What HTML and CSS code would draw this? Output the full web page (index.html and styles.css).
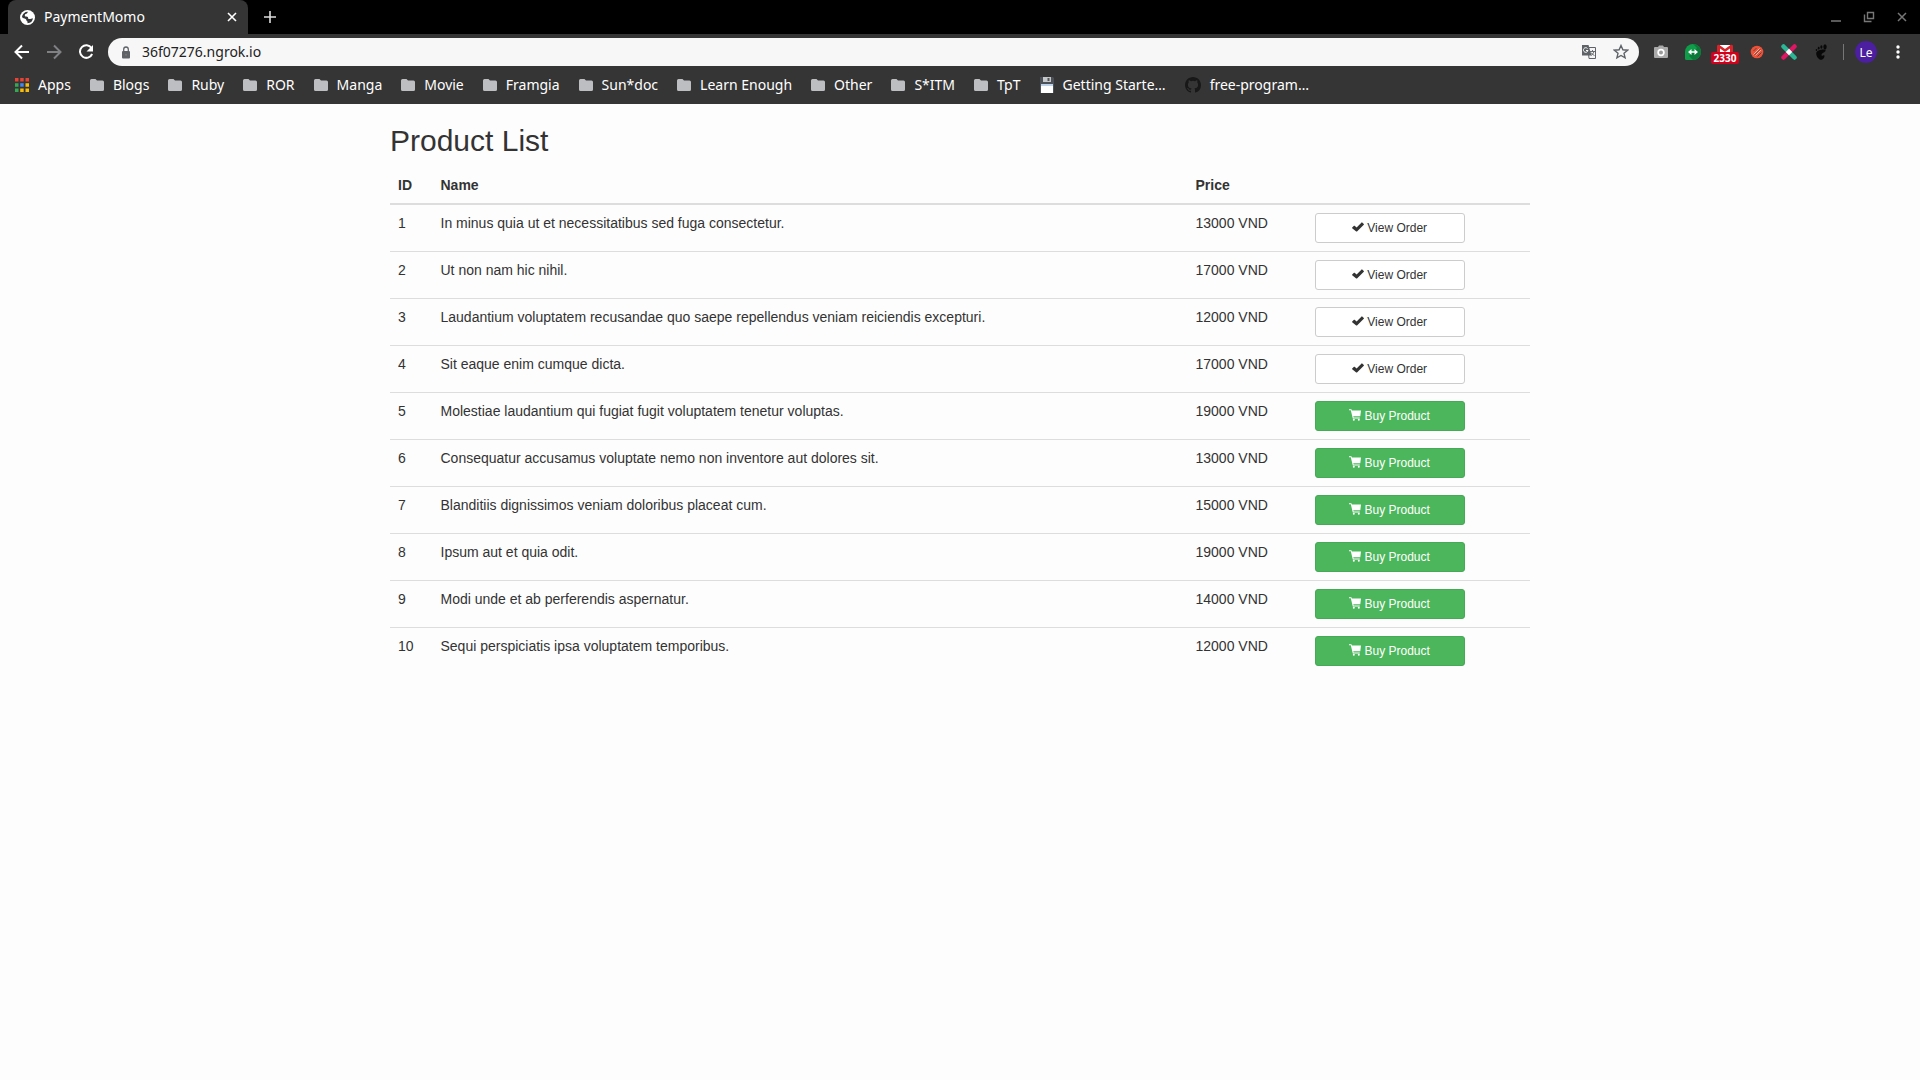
FILE: index.html
```html
<!DOCTYPE html>
<html lang="en">
<head>
	<meta charset="utf-8">
	<title>PaymentMomo</title>
	<link rel="stylesheet" href="styles.css">
</head>
<body>

	<!-- shapes used more than once -->
	<svg class="sprite" aria-hidden="true">
		<symbol id="folder" viewBox="0 0 14 12">
			<path d="M1.500 0h4l1.500 1.500h5.500A1.500 1.500 0 0 1 14 3v7.500a1.500 1.500 0 0 1-1.500 1.500h-11A1.500 1.500 0 0 1 0 10.500v-9A1.500 1.500 0 0 1 1.500 0z" fill="#bdbec1"/>
		</symbol>
		<symbol id="ok" viewBox="0 0 12 12">
			<path d="M.2 6.600 2 4.800q.3-.3.600 0l2 1.800L9.600 1.500q.3-.3.600 0l1.600 1.600q.3.300 0 .6L5 10.400q-.4.300-.8 0L.2 7.200q-.3-.3 0-.6z" fill="#333"/>
		</symbol>
		<symbol id="cart" viewBox="0 0 12 12">
			<path d="M0 .3h2.400l.5 1.200H12L11.300 7.300H4.300l.3 1.200h6.200v1H3.800L1.800 1.300H0z" fill="#fff"/>
			<circle cx="4.800" cy="10.800" r="1" fill="#fff"/>
			<circle cx="9.800" cy="10.800" r="1" fill="#fff"/>
		</symbol>
	</svg>

	<header class="browser">
		<div class="tabs">
			<div class="tab">
				<svg width="15" height="15" viewBox="0 0 16 16"><circle cx="8" cy="8" r="8" fill="#fff"/><path d="M8.500 2c-1 1-.5 1.500-1.800 2C5.300 4.500 5 5 5.200 6.300c.2 1 2.800.2 3.300 1.300.4 1-.2 1.600 1 1.900 1.500.3 2.700-.6 4.300-.8A6 6 0 0 1 8 14v-1.700c-1.500-.3-1-2-2-2.600C4.500 9 3 8.500 2.100 7.500A6 6 0 0 1 8.500 2z" fill="#35363a"/></svg>
				<span class="tab-title">PaymentMomo</span>
				<button class="icon-btn" aria-label="Close tab"><svg width="10" height="10" viewBox="0 0 10 10"><path d="M1 1l8 8M9 1l-8 8" stroke="#fff" stroke-width="1.600"/></svg></button>
			</div>
			<button class="icon-btn new-tab" aria-label="New tab"><svg width="12" height="12" viewBox="0 0 12 12"><path d="M6 0v12M0 6h12" stroke="#ddd" stroke-width="1.600"/></svg></button>
			<div class="window-buttons">
				<button class="icon-btn" aria-label="Minimize"><svg width="12" height="12" viewBox="0 0 12 12"><path d="M1 10h10" stroke="#777" stroke-width="1.500"/></svg></button>
				<button class="icon-btn" aria-label="Restore"><svg width="12" height="12" viewBox="0 0 12 12"><path d="M4.500 1.500h6v6h-6zM1.500 3.500v7h7" fill="none" stroke="#777" stroke-width="1.400"/></svg></button>
				<button class="icon-btn" aria-label="Close"><svg width="12" height="12" viewBox="0 0 12 12"><path d="M2 2l8 8M10 2l-8 8" stroke="#777" stroke-width="1.500"/></svg></button>
			</div>
		</div>

		<div class="toolbar">
			<div class="nav">
				<button class="icon-btn" aria-label="Back"><svg width="16" height="16" viewBox="0 0 16 16"><path d="M15 8H2M8 1.500 1.500 8 8 14.500" fill="none" stroke="#fff" stroke-width="2"/></svg></button>
				<button class="icon-btn" aria-label="Forward"><svg width="16" height="16" viewBox="0 0 16 16"><path d="M1 8h13M8 1.500 14.500 8 8 14.500" fill="none" stroke="#808184" stroke-width="2"/></svg></button>
				<button class="icon-btn" aria-label="Reload"><svg width="16" height="16" viewBox="0 0 16 16"><path d="M13.500 4A6.300 6.300 0 1 0 14.100 10" fill="none" stroke="#fff" stroke-width="2"/><path d="M15 1v6.500H8.500z" fill="#fff"/></svg></button>
			</div>

			<div class="address">
				<svg width="10" height="13" viewBox="0 0 10 13"><rect x="1" y="5" width="8" height="7.500" rx="1" fill="#5f6368"/><path d="M2.700 5.500V3.300a2.300 2.300 0 0 1 4.600 0v2.200" fill="none" stroke="#5f6368" stroke-width="1.300"/><circle cx="5" cy="8.700" r="1" fill="#777"/></svg>
				<input class="url" type="text" aria-label="Address" value="36f07276.ngrok.io">
				<div class="address-actions">
					<button class="icon-btn" aria-label="Translate"><svg width="16" height="16" viewBox="0 0 16 16"><path d="M7 3.500h7.500v11H8z" fill="#f5f5f5" stroke="#5f6368"/><path d="M1 1h6.500l3 10.500H1z" fill="#5f6368"/><path d="M6.500 4.500A2.300 2.300 0 1 0 7 6.500H5" fill="none" stroke="#fff"/><path d="M9 7.500h5M11.500 6v1.500M13 7.500q-.5 2.500-3 4M10 8.500q1 2 3.500 3" fill="none" stroke="#5f6368" stroke-width=".9"/></svg></button>
					<button class="icon-btn" aria-label="Bookmark this page"><svg width="16" height="16" viewBox="0 0 16 16"><path d="M8 1.500l1.900 4.300 4.700.4-3.600 3.100 1.100 4.600L8 11.500l-4.100 2.400L5 9.300 1.400 6.200l4.700-.4z" fill="none" stroke="#5f6368" stroke-width="1.400"/></svg></button>
				</div>
			</div>

			<div class="extensions">
				<button class="icon-btn" aria-label="Screenshot"><svg width="16" height="16" viewBox="0 0 16 16"><path d="M2 3h3l1-1.500h4L11 3h3q1 0 1 1v9q0 1-1 1H2q-1 0-1-1V4q0-1 1-1z" fill="#aaa"/><circle cx="8" cy="8.500" r="3.700" fill="#fff"/><circle cx="8" cy="8.500" r="2" fill="#999"/></svg></button>
				<button class="icon-btn" aria-label="Hangouts"><svg width="16" height="16" viewBox="0 0 16 16"><path d="M8 0a8 8 0 0 1 0 16H1.500Q0 16 0 14.500V8a8 8 0 0 1 8-8z" fill="#0f9d4a"/><path d="M8 0a8 8 0 0 1 0 16l-4-4 8-8z" fill="#0b7a38"/><path d="M4 8h8" stroke="#fff" stroke-width="1.500"/><path d="M6.500 5v6L3 8zM9.500 5v6L13 8z" fill="#fff"/></svg></button>
				<button class="icon-btn mail" aria-label="Mail"><svg width="16" height="16" viewBox="0 0 16 16"><rect y="1" width="16" height="12" rx="1" fill="#d8232a"/><path d="M3 1h10v12H3z" fill="#fff"/><path d="M1 1.500l7 5 7-5" fill="none" stroke="#d8232a" stroke-width="2.500"/></svg><span class="badge">2330</span></button>
				<button class="icon-btn" aria-label="Blocker"><svg width="16" height="16" viewBox="0 0 16 16"><circle cx="8" cy="8" r="6.300" fill="#ef5138"/><path d="M4.500 7l3-3M8.500 12.500l4-4" stroke="#444" stroke-width=".9"/><path d="M4.500 10.500l6-6M6.500 11.500l5.500-5.500" stroke="#f7b2a2" stroke-width="1"/><path d="M5.500 11l6-6" stroke="#444" stroke-width=".7"/></svg></button>
				<button class="icon-btn" aria-label="Pen tool"><svg width="16" height="16" viewBox="0 0 16 16"><g fill="none" stroke-width="4.500" stroke-linecap="round"><path d="M2.500 13.500l11-11" stroke="#e01563"/><path d="M2.500 2.500l11 11" stroke="#2bb795"/></g><path d="M8 4.800 11.200 8 8 11.200 4.800 8z" fill="#fff"/></svg></button>
				<button class="icon-btn" aria-label="Gnome"><svg width="16" height="16" viewBox="0 0 16 16"><path d="M12.500 5.500C9 5 3 6 3.200 9.500c.1 3 2.400 6.300 5 6.300 2 0 3.400-2.500 3.300-4-.3-1.300-1.500 0-2.500 0-1-.3-.5-2 .5-2.600 1.500-.8 3.500-1.500 3-3.700z" fill="#080808"/><ellipse cx="12" cy="2.800" rx="1.700" ry="2.600" fill="#080808"/><ellipse cx="8.400" cy="3" rx="1.100" ry="1.700" fill="#080808"/><ellipse cx="5.700" cy="4.200" rx=".9" ry="1.400" fill="#080808"/><ellipse cx="3.500" cy="6" rx=".8" ry="1.100" fill="#080808"/></svg></button>
			</div>
			<span class="divider"></span>
			<button class="avatar">Le</button>
			<button class="icon-btn" aria-label="Menu"><svg width="16" height="16" viewBox="0 0 16 16" fill="#fff"><circle cx="8" cy="3" r="1.700"/><circle cx="8" cy="8" r="1.700"/><circle cx="8" cy="13" r="1.700"/></svg></button>
		</div>

		<nav class="bookmarks">
			<a href="#"><svg width="14" height="14" viewBox="0 0 14 14"><path d="M0 0h3.500v3.500H0zM5.200 0h3.500v3.500H5.200zM10.500 0H14v3.500h-3.500z" fill="#ea4335"/><path d="M0 5.200h3.500v3.500H0zM0 10.500h3.500V14H0z" fill="#34a853"/><path d="M5.200 5.200h3.500v3.500H5.200z" fill="#4285f4"/><path d="M10.500 5.200H14v3.500h-3.500zM5.200 10.500h3.500V14H5.200zM10.500 10.500H14V14h-3.500z" fill="#fbbc05"/></svg>Apps</a>
			<a href="#"><svg width="14" height="12"><use href="#folder"/></svg>Blogs</a>
			<a href="#"><svg width="14" height="12"><use href="#folder"/></svg>Ruby</a>
			<a href="#"><svg width="14" height="12"><use href="#folder"/></svg>ROR</a>
			<a href="#"><svg width="14" height="12"><use href="#folder"/></svg>Manga</a>
			<a href="#"><svg width="14" height="12"><use href="#folder"/></svg>Movie</a>
			<a href="#"><svg width="14" height="12"><use href="#folder"/></svg>Framgia</a>
			<a href="#"><svg width="14" height="12"><use href="#folder"/></svg>Sun*doc</a>
			<a href="#"><svg width="14" height="12"><use href="#folder"/></svg>Learn Enough</a>
			<a href="#"><svg width="14" height="12"><use href="#folder"/></svg>Other</a>
			<a href="#"><svg width="14" height="12"><use href="#folder"/></svg>S*ITM</a>
			<a href="#"><svg width="14" height="12"><use href="#folder"/></svg>TpT</a>
			<a href="#"><svg width="14" height="16" viewBox="0 0 14 16"><path d="M0 0h13l1 1v15H0z" fill="#4b5157"/><path d="M3 0h8v5H3z" fill="#c5c8ca"/><path d="M7.500 1h2v3h-2z" fill="#555"/><path d="M1 7h12v9H1z" fill="#fff"/><path d="M1 7h12v2H1z" fill="#bcd0ea"/></svg>Getting Starte…</a>
			<a href="#"><svg width="16" height="16" viewBox="0 0 16 16"><path d="M8 0C3.580 0 0 3.580 0 8c0 3.540 2.290 6.530 5.470 7.590.4.070.55-.17.55-.38 0-.19-.01-.82-.01-1.490-2.010.37-2.530-.49-2.690-.94-.09-.23-.48-.94-.82-1.130-.28-.15-.68-.52-.01-.53.63-.01 1.080.58 1.230.82.72 1.210 1.870.87 2.330.66.07-.52.28-.87.51-1.070-1.780-.2-3.640-.89-3.640-3.950 0-.87.31-1.590.82-2.150-.08-.2-.36-1.020.08-2.120 0 0 .67-.21 2.200.82a7.600 7.600 0 0 1 4 0c1.530-1.040 2.200-.82 2.200-.82.44 1.100.16 1.920.08 2.120.51.56.82 1.270.82 2.150 0 3.070-1.870 3.750-3.650 3.950.29.25.54.73.54 1.480 0 1.070-.01 1.930-.01 2.200 0 .21.150.46.55.38A8 8 0 0 0 16 8c0-4.420-3.580-8-8-8z" fill="#181818"/></svg>free-program…</a>
		</nav>
	</header>

	<main class="container">
		<h2>Product List</h2>
		<table class="table">
			<thead>
				<tr><th>ID</th><th>Name</th><th>Price</th><th></th></tr>
			</thead>
			<tbody>
				<tr>
					<td>1</td>
					<td>In minus quia ut et necessitatibus sed fuga consectetur.</td>
					<td>13000 VND</td>
					<td><button class="btn btn-default"><svg width="12" height="12"><use href="#ok"/></svg> View Order</button></td>
				</tr>
				<tr>
					<td>2</td>
					<td>Ut non nam hic nihil.</td>
					<td>17000 VND</td>
					<td><button class="btn btn-default"><svg width="12" height="12"><use href="#ok"/></svg> View Order</button></td>
				</tr>
				<tr>
					<td>3</td>
					<td>Laudantium voluptatem recusandae quo saepe repellendus veniam reiciendis excepturi.</td>
					<td>12000 VND</td>
					<td><button class="btn btn-default"><svg width="12" height="12"><use href="#ok"/></svg> View Order</button></td>
				</tr>
				<tr>
					<td>4</td>
					<td>Sit eaque enim cumque dicta.</td>
					<td>17000 VND</td>
					<td><button class="btn btn-default"><svg width="12" height="12"><use href="#ok"/></svg> View Order</button></td>
				</tr>
				<tr>
					<td>5</td>
					<td>Molestiae laudantium qui fugiat fugit voluptatem tenetur voluptas.</td>
					<td>19000 VND</td>
					<td><button class="btn btn-success"><svg width="12" height="12"><use href="#cart"/></svg> Buy Product</button></td>
				</tr>
				<tr>
					<td>6</td>
					<td>Consequatur accusamus voluptate nemo non inventore aut dolores sit.</td>
					<td>13000 VND</td>
					<td><button class="btn btn-success"><svg width="12" height="12"><use href="#cart"/></svg> Buy Product</button></td>
				</tr>
				<tr>
					<td>7</td>
					<td>Blanditiis dignissimos veniam doloribus placeat cum.</td>
					<td>15000 VND</td>
					<td><button class="btn btn-success"><svg width="12" height="12"><use href="#cart"/></svg> Buy Product</button></td>
				</tr>
				<tr>
					<td>8</td>
					<td>Ipsum aut et quia odit.</td>
					<td>19000 VND</td>
					<td><button class="btn btn-success"><svg width="12" height="12"><use href="#cart"/></svg> Buy Product</button></td>
				</tr>
				<tr>
					<td>9</td>
					<td>Modi unde et ab perferendis aspernatur.</td>
					<td>14000 VND</td>
					<td><button class="btn btn-success"><svg width="12" height="12"><use href="#cart"/></svg> Buy Product</button></td>
				</tr>
				<tr>
					<td>10</td>
					<td>Sequi perspiciatis ipsa voluptatem temporibus.</td>
					<td>12000 VND</td>
					<td><button class="btn btn-success"><svg width="12" height="12"><use href="#cart"/></svg> Buy Product</button></td>
				</tr>
			</tbody>
		</table>
	</main>

</body>
</html>
```
FILE: styles.css
```css
*{
	box-sizing: border-box;
}

body{
	margin: 0;
	background-color: #fdfdfd;
	color: #333;
	font-family: "Liberation Sans", Arial, sans-serif;
	font-size: 14px;
	line-height: 20px;
}

button{
	font-family: inherit;
	cursor: pointer;
}

.sprite{
	display: none;
}

/* browser bar */
.browser{
	background-color: #353535;
	color: #fff;
	font-family: "Noto Sans", sans-serif;
	font-size: 14px;
}

.icon-btn{
	display: flex;
	flex: none;
	padding: 0;
	border: 0;
	background: none;
}

.tabs{
	display: flex;
	align-items: center;
	height: 34px;
	padding: 0 8px;
	background-color: #000;
}

.tab{
	display: flex;
	align-items: center;
	gap: 9px;
	width: 240px;
	height: 34px;
	padding: 0 11px 0 12px;
	background-color: #353535;
	border-radius: 8px 8px 0 0;
}

.tab-title{
	flex: 1;
}

.new-tab{
	margin-left: 16px;
}

.window-buttons{
	display: flex;
	gap: 21px;
	margin-left: auto;
	padding-right: 4px;
}

.toolbar{
	display: flex;
	align-items: center;
	height: 36px;
	padding: 0 14px;
}

.nav{
	display: flex;
	gap: 16px;
	margin-right: 14px;
}

.address{
	display: flex;
	align-items: center;
	flex: 1;
	gap: 11px;
	height: 28px;
	padding: 0 10px 0 13px;
	background-color: #f7f7f7;
	border-radius: 14px;
}

.url{
	flex: 1;
	padding: 0;
	border: 0;
	outline: 0;
	background: none;
	color: #222;
	font: inherit;
}

.address-actions{
	display: flex;
	gap: 16px;
}

.extensions{
	display: flex;
	gap: 16px;
	margin: 0 14px;
}

.mail{
	position: relative;
}

.badge{
	position: absolute;
	top: 8px;
	left: -6px;
	width: 28px;
	background-color: #d0021b;
	border-radius: 2px;
	color: #fff;
	font-size: 10px;
	font-weight: bold;
	line-height: 12px;
	text-align: center;
}

.divider{
	width: 1px;
	height: 16px;
	background-color: #777;
}

.avatar{
	width: 22px;
	height: 22px;
	margin: 0 13px 0 11px;
	padding: 0;
	border: 0;
	border-radius: 50%;
	background-color: #4b1fa0;
	color: #fff;
	font-size: 12px;
}

.bookmarks{
	display: flex;
	align-items: center;
	gap: 19px;
	height: 34px;
	padding: 0 15px 4px;
}

.bookmarks a{
	display: flex;
	align-items: center;
	gap: 9px;
	color: #fff;
	text-decoration: none;
	white-space: nowrap;
}

/* page */
.container{
	max-width: 1170px;
	margin: 0 auto;
	padding: 0 15px;
}

h2{
	margin: 20px 0 10px;
	font-size: 30px;
	font-weight: 500;
	line-height: 33px;
}

.table{
	width: 100%;
	border-collapse: collapse;
}

.table th, .table td{
	padding: 8px;
	text-align: left;
	vertical-align: top;
}

.table th{
	border-bottom: 2px solid #ddd;
}

.table td{
	border-top: 1px solid #ddd;
}

.btn{
	display: block;
	width: 150px;
	padding: 5px 10px;
	border: 1px solid #ccc;
	border-radius: 3px;
	font-size: 12px;
	line-height: 18px;
}

.btn svg{
	vertical-align: -1px;
}

.btn-default{
	background-color: #fff;
	color: #333;
}

.btn-success{
	background-color: #4cb65c;
	border-color: #45a955;
	color: #fff;
}
```
